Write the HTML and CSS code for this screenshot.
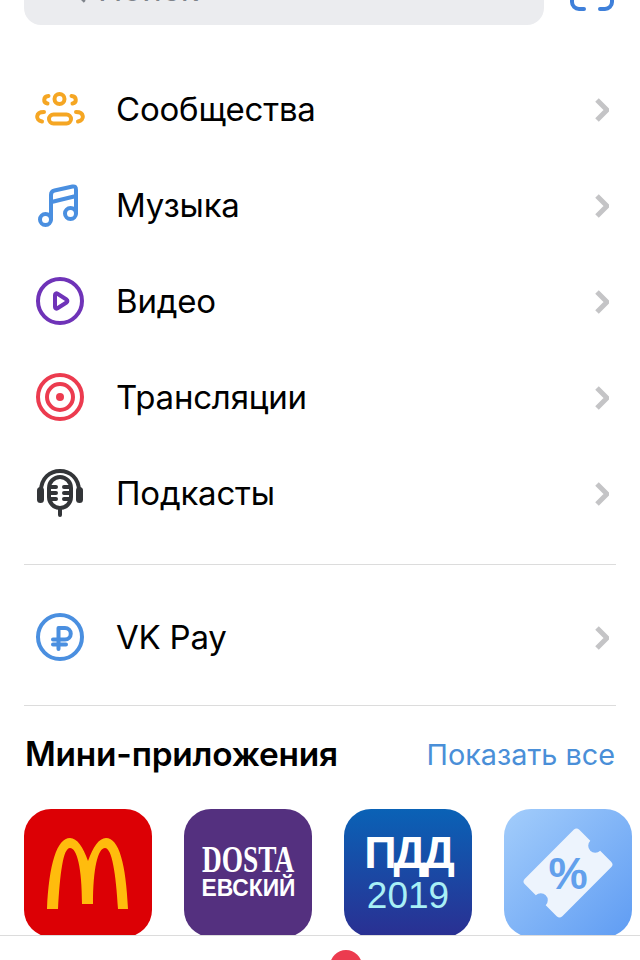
FILE: index.html
```html
<!DOCTYPE html>
<html lang="ru">
<head>
<meta charset="utf-8">
<title>Сервисы</title>
<link rel="stylesheet" href="styles.css">
</head>
<body>
<main class="screen">
  <div class="search-row">
    <div class="search">
      <svg class="search-icon" viewBox="0 0 24 24"><circle cx="11" cy="11" r="7"/><path d="M16 16l5 5"/></svg>
      <span>Поиск</span>
    </div>
    <svg class="scan" viewBox="570 -25 44 44"><path d="M572 -8v10a7 7 0 0 0 7 7h5M612 -8v10a7 7 0 0 1-7 7h-5"/></svg>
  </div>

  <ul class="list main-list">
    <li class="row">
      <svg class="icon orange" viewBox="36 85 48 48"><circle cx="59.500" cy="99" r="5"/><rect x="49" y="114.500" width="22" height="9" rx="4.500"/><path d="M48.500 96c-5.500.5-5.500 6.500-1 7.500M71.500 96c5.500.5 5.500 6.500 1 7.500M44 112c-8.500 0-9 8-2 9.500M76 112c8.500 0 9 8 2 9.500"/></svg>
      <span class="label">Сообщества</span>
      <svg class="chev" viewBox="0 0 14 24"><path d="M2 2l10 10L2 22"/></svg>
    </li>
    <li class="row">
      <svg class="icon blue" viewBox="36 181 48 48"><circle cx="45.500" cy="219.500" r="5.500"/><circle cx="70.500" cy="213.500" r="5.500"/><path d="M51 219V195c0-3 1-4 3.500-4.500l18-4c2.500-.5 3.500.5 3.500 3.500V213M51.500 202l24.500-6"/></svg>
      <span class="label">Музыка</span>
      <svg class="chev" viewBox="0 0 14 24"><path d="M2 2l10 10L2 22"/></svg>
    </li>
    <li class="row">
      <svg class="icon purple" viewBox="36 277 48 48"><circle cx="60" cy="301" r="22"/><path d="M55 295c0-1.500 1.300-2 2.500-1.300l9 5.800c1.200.8 1.200 2.200 0 3l-9 5.800c-1.200.7-2.500.2-2.500-1.300z"/></svg>
      <span class="label">Видео</span>
      <svg class="chev" viewBox="0 0 14 24"><path d="M2 2l10 10L2 22"/></svg>
    </li>
    <li class="row">
      <svg class="icon red" viewBox="0 0 48 48"><circle cx="24" cy="24" r="22"/><circle cx="24" cy="24" r="13"/><circle class="solid" cx="24" cy="24" r="4"/></svg>
      <span class="label">Трансляции</span>
      <svg class="chev" viewBox="0 0 14 24"><path d="M2 2l10 10L2 22"/></svg>
    </li>
    <li class="row">
      <svg class="icon dark" viewBox="0 0 48 48"><path d="M5 22C5 9 14 2 24 2s19 7 19 20"/><rect class="solid" x="1" y="18" width="7" height="16" rx="3.500"/><rect class="solid" x="40" y="18" width="7" height="16" rx="3.500"/><rect x="13" y="8" width="22" height="31" rx="11"/><path d="M15 18h5M15 24h5M15 30h5M28 18h5M28 24h5M28 30h5M24 39v7"/></svg>
      <span class="label">Подкасты</span>
      <svg class="chev" viewBox="0 0 14 24"><path d="M2 2l10 10L2 22"/></svg>
    </li>
  </ul>

  <ul class="list pay-list">
    <li class="row">
      <svg class="icon blue" viewBox="36 613 48 48"><circle cx="60" cy="637" r="22"/><path d="M58.500 649V628h6.500a5.500 5.500 0 0 1 0 11.500H53M53 644.500H66"/></svg>
      <span class="label">VK Pay</span>
      <svg class="chev" viewBox="0 0 14 24"><path d="M2 2l10 10L2 22"/></svg>
    </li>
  </ul>

  <section class="mini">
    <header class="mini-head">
      <h2 class="mini-title">Мини-приложения</h2>
      <a class="mini-link">Показать все</a>
    </header>
    <div class="apps">
      <div class="tile mcd">
        <svg viewBox="0 0 128 128"><path d="M23 100C25 55 33 29 46 29c7 0 13 9 18 23 5-14 11-23 18-23 13 0 20 26 22 71H94c-2-35-6-61-13-61-7 0-12 20-12 56H58c0-36-5-56-12-56-7 0-10 26-12 61z"/></svg>
      </div>
      <div class="tile dosta">
        <span class="dosta-top">DOSTA</span>
        <span class="dosta-bottom">ЕВСКИЙ</span>
      </div>
      <div class="tile pdd">
        <span class="pdd-top">ПДД</span>
        <span class="pdd-bottom">2019</span>
      </div>
      <div class="tile coupon">
        <svg viewBox="0 0 128 128">
          <path class="ticket" transform="rotate(-45 64 64)" d="M29.500 37.500H98.500a4 4 0 0 1 4 4V57a7 7 0 0 0 0 14V86.500a4 4 0 0 1-4 4H29.500a4 4 0 0 1-4-4V71a7 7 0 0 0 0-14V41.500a4 4 0 0 1 4-4z"/>
          <text class="percent" x="64" y="80">%</text>
        </svg>
      </div>
    </div>
  </section>
</main>
<nav class="tabbar"><span class="badge"></span></nav>
</body>
</html>
```
FILE: styles.css
```css
* { box-sizing: border-box; }
html, body { margin: 0; height: 960px; overflow: hidden; background: #fff; }
body { font-family: Inter, "Noto Sans", sans-serif; color: #000; }

.screen { height: 935px; overflow: hidden; }

.search-row { display: flex; align-items: center; gap: 26px; height: 56px; margin: -31px 26px 0 24px; }
.search { flex: 1; height: 56px; padding: 0 0 16px 38px; border-radius: 17px; background: #ebecef; display: flex; align-items: center; gap: 10px; color: #7f848b; font-size: 33px; }
.search-icon { width: 26px; height: 26px; margin-top: 6px; fill: none; stroke: #7f848b; stroke-width: 2.500; }
.scan { width: 44px; height: 44px; flex: none; fill: none; stroke: #3f80da; stroke-width: 4; stroke-linecap: round; }

.list { list-style: none; margin: 0; padding: 0; }
.main-list { margin: 36px 24px 0; padding-bottom: 23px; border-bottom: 1px solid #dcdcdc; }
.pay-list { margin: 0 24px; padding: 24px 0 20px; border-bottom: 1px solid #dcdcdc; }

.row { height: 96px; display: flex; align-items: center; padding: 0 7px 0 12px; }
.label { flex: 1; margin-left: 32px; font-size: 33px; letter-spacing: -0.2px; }
.chev { width: 14px; height: 24px; margin-top: 2px; fill: none; stroke: #c4c4c6; stroke-width: 5; }

.icon { width: 48px; height: 48px; flex: none; overflow: visible; fill: none; stroke-width: 4; stroke-linecap: round; stroke-linejoin: round; }
.orange { stroke: #f5a623; }
.blue { stroke: #4a8fe0; }
.purple { stroke: #6f33b8; }
.red { stroke: #ec3b4f; }
.dark { stroke: #333538; }
.red .solid { fill: #ec3b4f; stroke: none; }
.dark .solid { fill: #333538; stroke: none; }

.mini { margin: 0 24px 0; }
.mini-head { display: flex; align-items: center; justify-content: space-between; height: 48px; margin: 24px 1px 31px; }
.mini-title { margin: 0; font-size: 33.400px; font-weight: 600; letter-spacing: -0.2px; }
.mini-link { color: #4a8fd8; font-size: 28.800px; }

.apps { display: flex; gap: 32px; width: 640px; }
.tile { width: 128px; height: 128px; flex: none; border-radius: 27px; display: flex; flex-direction: column; align-items: center; justify-content: center; color: #fff; }
.tile svg { width: 128px; height: 128px; }
.mcd { background: #dc0005; }
.mcd path { fill: #ffbc0d; }
.dosta { background: #54307f; line-height: 1; font-weight: 700; }
.dosta-top { font-family: "Liberation Serif", serif; font-size: 38px; line-height: 34px; margin-top: -4px; transform: scaleX(.72); }
.dosta-bottom { font-family: "Liberation Sans", sans-serif; font-size: 24px; line-height: 24px; transform: scaleX(.95); }
.pdd { background: linear-gradient(#0a62b6, #2a2f92); font-family: "Liberation Sans", sans-serif; line-height: 1; }
.pdd-top { font-size: 45px; font-weight: 700; letter-spacing: -3px; margin-top: -2px; }
.pdd-bottom { font-size: 37px; color: #a8f0f6; margin-top: 2px; }
.coupon { background: linear-gradient(135deg, #a3cdfb, #5f9cf3); }
.ticket { fill: #edf4fd; }
.percent { fill: #62a0ec; font-family: "Liberation Sans", sans-serif; font-size: 44px; font-weight: 700; text-anchor: middle; }

.tabbar { position: relative; height: 25px; border-top: 1px solid #dcdcdc; background: #fff; overflow: hidden; }
.badge { position: absolute; left: 330px; top: 14px; width: 32px; height: 32px; border-radius: 50%; background: #ec3b4f; }
```
